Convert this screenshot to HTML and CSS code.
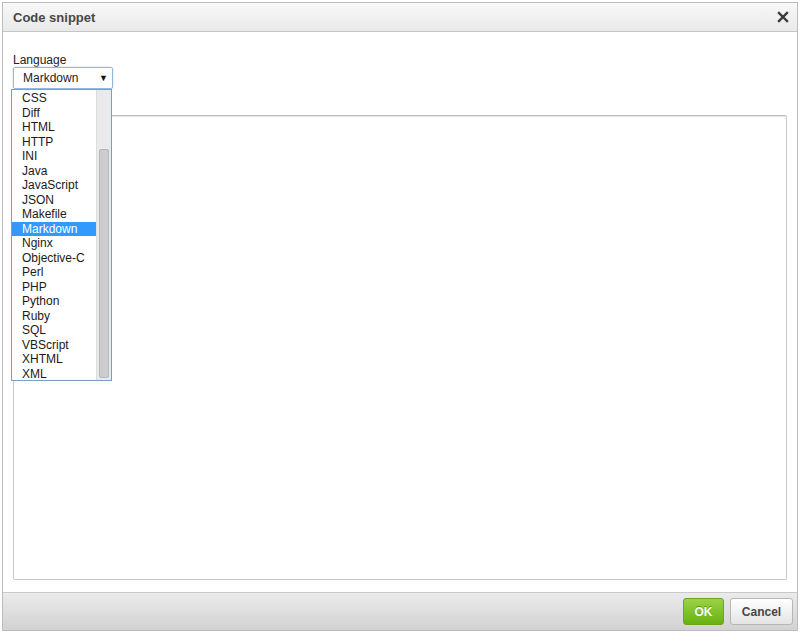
FILE: index.html
```html
<!DOCTYPE html>
<html lang="en">
<head>
    <meta charset="UTF-8">
    <title>Code snippet</title>
    <link rel="stylesheet" href="styles.css">
</head>
<body>
    <div class="dialog">
        <div class="dialog-title">
            <span>Code snippet</span>
            <svg class="close" width="12" height="12" viewBox="0 0 12 12">
                <path d="M2 2 L10 10 M10 2 L2 10" stroke="#3a3a3a" stroke-width="2.4" stroke-linecap="square"/>
            </svg>
        </div>
        <div class="dialog-body">
            <label class="field-label">Language</label>
            <div class="select-wrap">
                <div class="select">
                    <span>Markdown</span>
                    <span class="arrow">&#9660;</span>
                </div>
                <div class="dropdown">
                    <ul class="options">
                        <li>CSS</li>
                        <li>Diff</li>
                        <li>HTML</li>
                        <li>HTTP</li>
                        <li>INI</li>
                        <li>Java</li>
                        <li>JavaScript</li>
                        <li>JSON</li>
                        <li>Makefile</li>
                        <li class="selected">Markdown</li>
                        <li>Nginx</li>
                        <li>Objective-C</li>
                        <li>Perl</li>
                        <li>PHP</li>
                        <li>Python</li>
                        <li>Ruby</li>
                        <li>SQL</li>
                        <li>VBScript</li>
                        <li>XHTML</li>
                        <li>XML</li>
                    </ul>
                    <div class="scrollbar">
                        <div class="thumb"></div>
                    </div>
                </div>
            </div>
            <div class="code-area"></div>
        </div>
        <div class="dialog-footer">
            <button class="btn btn-ok">OK</button>
            <button class="btn btn-cancel">Cancel</button>
        </div>
    </div>
</body>
</html>
```

FILE: styles.css
```css
/* base */
body, html {
    margin: 0;
    padding: 0;
    background: #fff;
    font-family: Arial, "Liberation Sans", sans-serif;
}

/* dialog */
.dialog {
    margin: 2px 0 0 2px;
    width: 794px;
    height: 627px;
    border: 1px solid #bcbcbc;
    display: flex;
    flex-direction: column;
    background: #fff;
}

.dialog-title {
    height: 28px;
    border-bottom: 1px solid #c6c6c6;
    background: linear-gradient(#f8f8f8, #e9e9e9);
    display: flex;
    justify-content: space-between;
    align-items: center;
    padding: 0 8px 0 10px;
    font-size: 13px;
    font-weight: bold;
    color: #474747;
}

.close {
    display: block;
}

.dialog-body {
    flex: 1;
    padding: 21px 10px 12px 10px;
    display: flex;
    flex-direction: column;
}

.field-label {
    font-size: 12px;
    color: #222;
    line-height: 14px;
    margin-bottom: 0;
}

.select-wrap {
    position: relative;
    width: 100px;
}

.select {
    height: 20px;
    border: 1px solid #8fb9e3;
    border-radius: 2px;
    box-shadow: 0 0 2px #a8d0f5;
    display: flex;
    justify-content: space-between;
    align-items: center;
    padding: 0 4px 0 9px;
    font-size: 12px;
    color: #222;
}

.arrow {
    font-size: 9px;
    color: #111;
}

.dropdown {
    position: absolute;
    left: -2px;
    top: 22px;
    width: 99px;
    height: 290px;
    border: 1px solid #7f9bbd;
    background: #fff;
    display: flex;
    z-index: 2;
}

.options {
    list-style: none;
    margin: 0;
    padding: 1px 0 0 0;
    flex: 1;
    font-size: 12px;
    color: #1a1a1a;
}

.options li {
    height: 14.5px;
    line-height: 14px;
    padding-left: 10px;
}

.options li.selected {
    background: #3399ff;
    color: #fff;
}

.scrollbar {
    width: 14px;
    background: #eaeaea;
    border-left: 1px solid #dcdcdc;
    position: relative;
}

.scrollbar .thumb {
    position: absolute;
    left: 2px;
    right: 2px;
    top: 59px;
    bottom: 2px;
    background: #cdcdcd;
    border: 1px solid #b8b8b8;
    border-radius: 2px;
}

.code-area {
    margin-top: 26px;
    height: 463px;
    border: 1px solid #c9c9c9;
    border-top-color: #bdbdbd;
    border-radius: 2px;
    box-shadow: inset 0 1px 1px #e4e4e4;
}

/* footer */
.dialog-footer {
    height: 37px;
    border-top: 1px solid #c9c9c9;
    background: linear-gradient(#ebebeb, #d2d2d2);
    display: flex;
    justify-content: flex-end;
    align-items: center;
    gap: 6px;
    padding-right: 4px;
}

.btn {
    height: 27px;
    border-radius: 3px;
    font-family: Arial, "Liberation Sans", sans-serif;
    font-size: 12px;
    font-weight: bold;
    padding: 0;
}

.btn-ok {
    width: 41px;
    color: #fff;
    border: 1px solid #6aa915;
    background: linear-gradient(#9ad347, #67b20f);
    text-shadow: 0 -1px 0 #5a9a0c;
}

.btn-cancel {
    width: 63px;
    color: #474747;
    border: 1px solid #b6b6b6;
    background: linear-gradient(#ffffff, #e4e4e4);
}
```
